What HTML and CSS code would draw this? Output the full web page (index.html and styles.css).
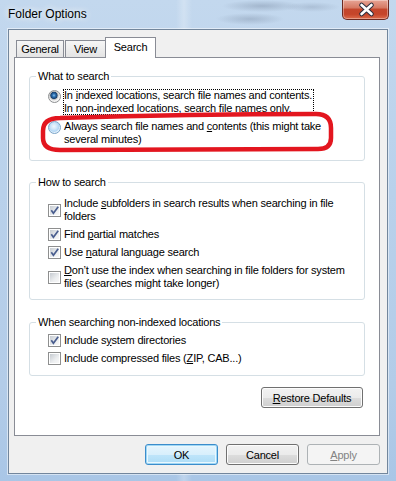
FILE: index.html
```html
<!DOCTYPE html>
<html lang="en">
<head>
    <meta charset="UTF-8">
    <title>Folder Options</title>
    <link rel="stylesheet" href="styles.css">
</head>
<body>
    <div class="window">
        <div class="titlebar">
            <span class="title">Folder Options</span>
            <div class="close">
                <svg width="47" height="19" viewBox="0 0 47 19">
                    <path d="M19.5 5 L29.5 14 M29.5 5 L19.5 14" stroke="#2b2d3d" stroke-width="4.6" stroke-linecap="round"/>
                    <path d="M19.5 5 L29.5 14 M29.5 5 L19.5 14" stroke="#ffffff" stroke-width="2.6" stroke-linecap="round"/>
                </svg>
            </div>
        </div>

        <div class="client">
            <div class="tabs">
                <div class="tab tab-general">General</div>
                <div class="tab tab-view">View</div>
                <div class="tab tab-search active">Search</div>
            </div>

            <div class="panel">
                <fieldset class="group group-what">
                    <legend>What to search</legend>
                    <div class="options">
                        <div class="option">
                            <span class="radio checked"></span>
                            <span class="label focus">In <u>i</u>ndexed locations, search file names and contents.<br>In non-indexed locations, search file names only.</span>
                        </div>
                        <div class="option">
                            <span class="radio hover"></span>
                            <span class="label">Always search file names and <u>c</u>ontents (this might take<br>several minutes)</span>
                        </div>
                        <!-- red mark drawn over the dialog -->
                        <svg class="mark" width="294" height="42" viewBox="0 0 294 42">
                            <path d="M20 7 Q150 3 276 3 Q291 3 291 17 L291 27 Q291 38 278 38 L20 39 Q3 39 3 27 L3 20 Q3 7 20 7 Z" fill="none" stroke="#e3161f" stroke-width="4.5"/>
                        </svg>
                    </div>
                </fieldset>

                <fieldset class="group group-how">
                    <legend>How to search</legend>
                    <div class="options">
                        <div class="option center">
                            <span class="check on"><svg width="9" height="9" viewBox="0 0 9 9"><path d="M1.3 4.3 L3.4 7.2 L8.2 0.8" fill="none" stroke="#4a5e8f" stroke-width="1.7"/></svg></span>
                            <span class="label">Include <u>s</u>ubfolders in search results when searching in file<br>folders</span>
                        </div>
                        <div class="option center">
                            <span class="check on"><svg width="9" height="9" viewBox="0 0 9 9"><path d="M1.3 4.3 L3.4 7.2 L8.2 0.8" fill="none" stroke="#4a5e8f" stroke-width="1.7"/></svg></span>
                            <span class="label">Find <u>p</u>artial matches</span>
                        </div>
                        <div class="option center">
                            <span class="check on"><svg width="9" height="9" viewBox="0 0 9 9"><path d="M1.3 4.3 L3.4 7.2 L8.2 0.8" fill="none" stroke="#4a5e8f" stroke-width="1.7"/></svg></span>
                            <span class="label">Use <u>n</u>atural language search</span>
                        </div>
                        <div class="option center">
                            <span class="check"></span>
                            <span class="label"><u>D</u>on’t use the index when searching in file folders for system<br>files (searches might take longer)</span>
                        </div>
                    </div>
                </fieldset>

                <fieldset class="group group-non">
                    <legend>When searching non-indexed locations</legend>
                    <div class="options">
                        <div class="option center">
                            <span class="check on"><svg width="9" height="9" viewBox="0 0 9 9"><path d="M1.3 4.3 L3.4 7.2 L8.2 0.8" fill="none" stroke="#4a5e8f" stroke-width="1.7"/></svg></span>
                            <span class="label">Include s<u>y</u>stem directories</span>
                        </div>
                        <div class="option center">
                            <span class="check"></span>
                            <span class="label">Include compressed files (<u>Z</u>IP, CAB...)</span>
                        </div>
                    </div>
                </fieldset>

                <div class="restore">
                    <button class="btn btn-wide"><u>R</u>estore Defaults</button>
                </div>
            </div>

            <div class="buttons">
                <button class="btn default">OK</button>
                <button class="btn">Cancel</button>
                <button class="btn disabled"><u>A</u>pply</button>
            </div>
        </div>
    </div>
</body>
</html>
```

FILE: styles.css
```css
body {
    margin: 0;
    background: #b7cfe9;
    font-family: "Liberation Sans", Arial, sans-serif;
    font-size: 11px;
    line-height: 13px;
    color: #000;
}

.window {
    width: 396px;
    height: 481px;
    box-sizing: border-box;
    display: flex;
    flex-direction: column;
    background:
        radial-gradient(ellipse 40px 6px at 262px 6px, rgba(80, 95, 120, 0.28), transparent),
        radial-gradient(ellipse 34px 6px at 250px 19px, rgba(80, 95, 120, 0.25), transparent),
        radial-gradient(ellipse 28px 5px at 312px 7px, rgba(80, 95, 120, 0.2), transparent),
        linear-gradient(to right, transparent 176px, rgba(255, 255, 255, 0.25) 184px, transparent 192px),
        linear-gradient(to bottom, #c3d8ee 0%, #b9d1eb 40%, #b3cce8 80%, #a9c6e6 100%);
}

/* title bar */
.titlebar {
    height: 29px;
    display: flex;
    justify-content: space-between;
    align-items: center;
    padding: 0 7px 0 8px;
}

.title {
    font-size: 12px;
    letter-spacing: 0;
    text-shadow: 0 0 6px rgba(255, 255, 255, 0.9), 0 0 10px rgba(255, 255, 255, 0.7);
}

.close {
    align-self: flex-start;
    width: 47px;
    height: 20px;
    box-sizing: border-box;
    border: 1px solid #6b2a22;
    border-top: none;
    border-radius: 0 0 5px 5px;
    background: linear-gradient(to bottom, #e7a596 0%, #d67a64 40%, #c4462c 50%, #c5452a 75%, #dd6c4c 100%);
    box-shadow: inset 0 0 0 1px rgba(255, 255, 255, 0.35);
}

.close svg {
    display: block;
    margin-left: -1px;
}

/* client area */
.client {
    margin: 0 8px;
    border: 1px solid #72869c;
    background: #f0f0f0;
    padding: 7px 7px 8px 5px;
    box-shadow: 0 0 0 1px rgba(255, 255, 255, 0.5);
    letter-spacing: -0.2px;
}

.tabs {
    display: flex;
    align-items: flex-end;
    height: 20px;
    padding-left: 2px;
}

.tab {
    box-sizing: border-box;
    height: 17px;
    border: 1px solid #898c95;
    border-bottom: none;
    background: linear-gradient(to bottom, #f6f6f6, #e4e4e4);
    text-align: center;
    line-height: 16px;
}

.tab-general {
    width: 48px;
    margin-right: 1px;
}

.tab-view {
    width: 40px;
    border-right: none;
}

.tab-search {
    width: 51px;
}

.tab.active {
    position: relative;
    z-index: 1;
    height: 21px;
    margin-bottom: -1px;
    background: #fff;
    line-height: 14px;
    padding-top: 2px;
}

.panel {
    height: 379px;
    box-sizing: border-box;
    border: 1px solid #898c95;
    background: #fff;
    padding-top: 12px;
}

/* group boxes */
.group {
    margin: 0 15px 0 14px;
    padding: 0;
    width: 336px;
    box-sizing: border-box;
    border: 1px solid #d5dfe5;
    border-radius: 3px;
    min-width: 0;
}

.group legend {
    margin-left: 6px;
    padding: 0 2px;
    line-height: 13px;
}

.group-how {
    margin-top: 15px;
}

.group-non {
    margin-top: 16px;
}

.options {
    position: relative;
    display: flex;
    flex-direction: column;
    gap: 5px;
    padding-left: 18px;
}

.group-what .options {
    padding-top: 6px;
    padding-bottom: 14px;
}

.group-how .options {
    padding-top: 8px;
    padding-bottom: 9px;
}

.group-non .options {
    padding-top: 5px;
    padding-bottom: 10px;
}

.option {
    display: flex;
    align-items: flex-start;
    gap: 2px;
}

.option.center {
    align-items: center;
}

.label {
    padding: 0 2px 0 1px;
}

.label.focus {
    outline: 1px dotted #000;
    outline-offset: -1px;
}

/* radio buttons */
.radio {
    flex: none;
    width: 13px;
    height: 13px;
    box-sizing: border-box;
    margin-top: 1px;
    border: 1px solid #8d8f91;
    border-radius: 50%;
    background: radial-gradient(circle at 50% 50%, #e6e6e6, #f7f7f7 70%);
}

.radio.checked {
    background: radial-gradient(circle at 45% 40%, #8fc3ee 0, #2f74b6 1.5px, #19406e 3.3px, #a9abad 3.8px, #dadada 4.6px, #f4f4f4 5.5px);
}

.radio.hover {
    border-color: #7aa4c8;
    background: radial-gradient(circle at 45% 40%, #f1f8fe 0, #cfe6fa 3px, #b4d7f4 5px, #e3f1fc 6px);
}

/* check boxes */
.check {
    flex: none;
    width: 13px;
    height: 13px;
    box-sizing: border-box;
    border: 1px solid #8e8f8f;
    padding: 1px;
    background: linear-gradient(135deg, #c6cbd1, #eceef0 60%, #f8f8f8) content-box;
}

.check svg {
    display: block;
    overflow: visible;
}

.mark {
    position: absolute;
    left: 10px;
    top: 28px;
}

/* buttons */
.btn {
    width: 73px;
    height: 21px;
    box-sizing: border-box;
    padding: 0;
    border: 1px solid #707070;
    border-radius: 3px;
    background: linear-gradient(to bottom, #f2f2f2 0%, #ebebeb 50%, #dddddd 51%, #cfcfcf 100%);
    box-shadow: inset 0 0 0 1px #fcfcfc;
    font-family: inherit;
    font-size: 11px;
    letter-spacing: -0.2px;
    color: #000;
}

.btn-wide {
    width: 102px;
}

.btn.default {
    border-color: #3b8ccb;
    background: linear-gradient(to bottom, #e6f5fd 0%, #d8effc 50%, #bfe5fa 51%, #acdcf6 100%);
    box-shadow: inset 0 0 0 1px #9fd7f5, inset 0 0 0 2px #e9f7fe;
}

.btn.disabled {
    border-color: #adb2b5;
    background: #f4f4f4;
    box-shadow: none;
    color: #838383;
}

.restore {
    display: flex;
    justify-content: flex-end;
    margin: 11px 16px 0 0;
}

.buttons {
    display: flex;
    justify-content: flex-end;
    gap: 8px;
    margin-top: 8px;
}
```
